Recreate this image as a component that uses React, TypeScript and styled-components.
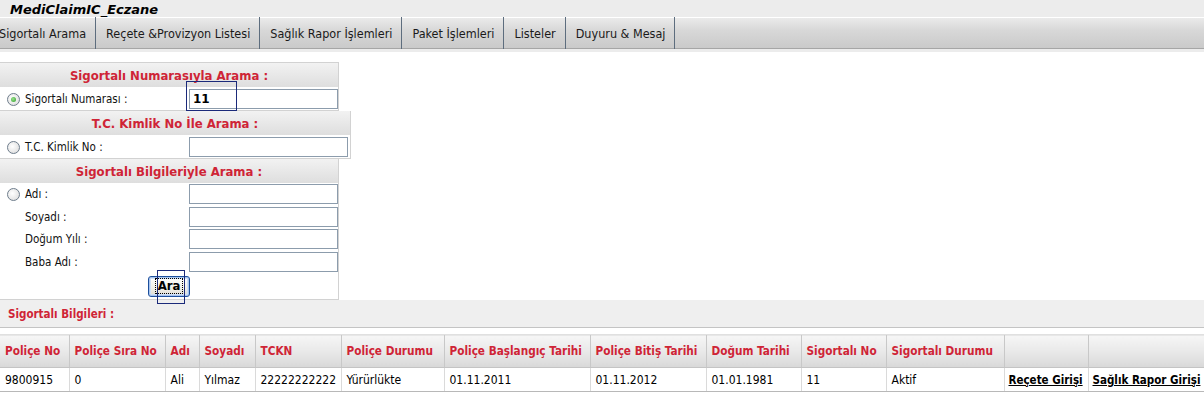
import React from "react";
import styled, { createGlobalStyle } from "styled-components";

const GlobalStyle = createGlobalStyle`
  html, body {
    margin: 0;
    padding: 0;
    background: #ffffff;
    font-family: "DejaVu Sans Condensed", "DejaVu Sans", sans-serif;
    color: #000;
    overflow: hidden;
  }
`;

const RED = "#cf2436";

const menuItems = [
  "Sigortalı Arama",
  "Reçete &Provizyon Listesi",
  "Sağlık Rapor İşlemleri",
  "Paket İşlemleri",
  "Listeler",
  "Duyuru & Mesaj",
];

const columns = [
  { title: "Poliçe No", width: 69 },
  { title: "Poliçe Sıra No", width: 96 },
  { title: "Adı", width: 34 },
  { title: "Soyadı", width: 56 },
  { title: "TCKN", width: 86 },
  { title: "Poliçe Durumu", width: 103 },
  { title: "Poliçe Başlangıç Tarihi", width: 146 },
  { title: "Poliçe Bitiş Tarihi", width: 116 },
  { title: "Doğum Tarihi", width: 95 },
  { title: "Sigortalı No", width: 85 },
  { title: "Sigortalı Durumu", width: 118 },
  { title: "", width: 84 },
  { title: "", width: 116 },
];

const row = [
  "9800915",
  "0",
  "Ali",
  "Yılmaz",
  "22222222222",
  "Yürürlükte",
  "01.11.2011",
  "01.11.2012",
  "01.01.1981",
  "11",
  "Aktif",
];

export default function App() {
  return (
    <Page>
      <GlobalStyle />
      <TitleBar>MediClaimIC_Eczane</TitleBar>
      <NavBar>
        <NavList>
          {menuItems.map((m) => (
            <NavItem key={m}>{m}</NavItem>
          ))}
        </NavList>
      </NavBar>

      <SearchArea>
        <Panel $width={339}>
          <PanelHeader>Sigortalı Numarasıyla Arama :</PanelHeader>
          <FieldRow>
            <FieldLabel>
              <Radio $checked />
              Sigortalı Numarası :
            </FieldLabel>
            <TextInput $width={149} defaultValue="11" $bold />
          </FieldRow>
        </Panel>

        <Panel $width={351}>
          <PanelHeader>T.C. Kimlik No İle Arama :</PanelHeader>
          <FieldRow>
            <FieldLabel>
              <Radio />
              T.C. Kimlik No :
            </FieldLabel>
            <TextInput $width={159} />
          </FieldRow>
        </Panel>

        <Panel $width={339}>
          <PanelHeader>Sigortalı Bilgileriyle Arama :</PanelHeader>
          <FieldRow $compact>
            <FieldLabel>
              <Radio />
              Adı :
            </FieldLabel>
            <TextInput $width={149} />
          </FieldRow>
          <FieldRow $compact>
            <FieldLabel>Soyadı :</FieldLabel>
            <TextInput $width={149} />
          </FieldRow>
          <FieldRow $compact>
            <FieldLabel>Doğum Yılı :</FieldLabel>
            <TextInput $width={149} />
          </FieldRow>
          <FieldRow $compact>
            <FieldLabel>Baba Adı :</FieldLabel>
            <TextInput $width={149} />
          </FieldRow>
          <ButtonRow>
            <SearchButton>
              <span>Ara</span>
            </SearchButton>
          </ButtonRow>
        </Panel>

        <FocusMark $x={186} $y={29} $w={51} $h={30} />
        <FocusMark $x={157} $y={218} $w={28} $h={34} />
      </SearchArea>

      <ResultBand>Sigortalı Bilgileri :</ResultBand>

      <ResultTable>
        <colgroup>
          {columns.map((c, i) => (
            <col key={i} style={{ width: c.width }} />
          ))}
        </colgroup>
        <thead>
          <tr>
            {columns.map((c, i) => (
              <HeadCell key={i}>{c.title}</HeadCell>
            ))}
          </tr>
        </thead>
        <tbody>
          <tr>
            {row.map((v, i) => (
              <DataCell key={i}>{v}</DataCell>
            ))}
            <DataCell>
              <ActionLink href="#">Reçete Girişi</ActionLink>
            </DataCell>
            <DataCell>
              <ActionLink href="#">Sağlık Rapor Girişi</ActionLink>
            </DataCell>
          </tr>
        </tbody>
      </ResultTable>
    </Page>
  );
}

const Page = styled.div`
  width: 1204px;
  height: 393px;
  overflow: hidden;
`;

const TitleBar = styled.div`
  height: 17px;
  background: #ececec;
  padding-left: 10px;
  font-family: "DejaVu Sans", sans-serif;
  font-weight: bold;
  font-style: italic;
  font-size: 13px;
  line-height: 20px;
  border-bottom: 1px solid #ffffff;
  overflow: hidden;
`;

const NavBar = styled.div`
  height: 30px;
  background: linear-gradient(#eaeaea 0%, #d8d8d8 40%, #cacaca 100%);
  border-bottom: 1px solid #a6a6a6;
  box-shadow: 0 3px 0 #ececec;
  margin-bottom: 3px;
`;

const NavList = styled.div`
  display: flex;
  height: 100%;
  margin-left: -11px;
`;

const NavItem = styled.div`
  display: flex;
  align-items: center;
  padding: 0 9px 0 10px;
  height: 32px;
  margin-top: -1px;
  font-size: 12.5px;
  color: #1a1a1a;
  border-right: 1px solid #5d6d7e;
  white-space: nowrap;
`;

const SearchArea = styled.div`
  position: relative;
  padding-top: 10px;
  display: flex;
  flex-direction: column;
  align-items: flex-start;
`;

const Panel = styled.div<{ $width: number }>`
  width: ${(p) => p.$width}px;
  box-sizing: border-box;
  border: 1px solid #d2d2d2;
  border-left: none;
  background: #fff;
  & + & {
    border-top: none;
  }
`;

const PanelHeader = styled.div`
  height: 24px;
  display: flex;
  align-items: center;
  justify-content: center;
  background: linear-gradient(#f2f2f2, #dedede);
  color: ${RED};
  font-weight: bold;
  font-size: 13px;
`;

const FieldRow = styled.div<{ $compact?: boolean }>`
  display: flex;
  align-items: center;
  height: ${(p) => (p.$compact ? "22.5px" : "23px")};
`;

const FieldLabel = styled.div`
  width: 189px;
  padding-left: 25px;
  box-sizing: border-box;
  position: relative;
  font-size: 11.5px;
  color: #111;
  display: flex;
  align-items: center;
`;

const Radio = styled.span<{ $checked?: boolean }>`
  position: absolute;
  left: 7px;
  top: 50%;
  margin-top: -6px;
  width: 11px;
  height: 11px;
  border-radius: 50%;
  border: 1px solid #6e7d8c;
  background: radial-gradient(circle at 40% 40%, #ffffff 0%, #e4e4e4 70%, #d0d0d0 100%);
  &::after {
    content: "";
    display: ${(p) => (p.$checked ? "block" : "none")};
    position: absolute;
    left: 3px;
    top: 3px;
    width: 5px;
    height: 5px;
    border-radius: 50%;
    background: radial-gradient(circle at 40% 40%, #9be28e, #2a9b25);
  }
`;

const TextInput = styled.input<{ $width: number; $bold?: boolean }>`
  width: ${(p) => p.$width}px;
  height: 20px;
  box-sizing: border-box;
  border: 1px solid #8c9cac;
  padding: 0 0 0 3px;
  margin: 0;
  font-family: "DejaVu Sans", sans-serif;
  font-size: 12px;
  font-weight: ${(p) => (p.$bold ? "bold" : "normal")};
  color: #000;
  outline: none;
  background: #fff;
`;

const ButtonRow = styled.div`
  height: 26px;
  padding-left: 148px;
  display: flex;
  align-items: center;
`;

const SearchButton = styled.button`
  width: 42px;
  height: 21px;
  padding: 0;
  border: 1px solid #1c4f9c;
  border-radius: 3px;
  background: linear-gradient(#ffffff, #f0efe8 60%, #dcdad0);
  box-shadow: inset 0 0 0 1px #a8c4ee, inset 0 0 0 2px #cfe0f8;
  font-family: "DejaVu Sans Condensed", sans-serif;
  font-weight: bold;
  font-size: 13px;
  color: #000;
  display: flex;
  align-items: center;
  justify-content: center;
  span {
    outline: 1px dotted #000;
    outline-offset: 0;
    padding: 0 2px;
    line-height: 14px;
  }
`;

const FocusMark = styled.div<{ $x: number; $y: number; $w: number; $h: number }>`
  position: absolute;
  left: ${(p) => p.$x}px;
  top: ${(p) => p.$y}px;
  width: ${(p) => p.$w}px;
  height: ${(p) => p.$h}px;
  box-sizing: border-box;
  border: 1px solid #1b2a7a;
  pointer-events: none;
`;

const ResultBand = styled.div`
  height: 27px;
  background: #efefef;
  border-bottom: 1px solid #c4c4c4;
  padding-left: 8px;
  display: flex;
  align-items: center;
  color: ${RED};
  font-weight: bold;
  font-size: 11.5px;
  margin-bottom: 6px;
`;

const ResultTable = styled.table`
  width: 1204px;
  border-collapse: collapse;
  table-layout: fixed;
`;

const HeadCell = styled.th`
  height: 32px;
  padding: 0 5px;
  text-align: left;
  background: linear-gradient(#f6f6f6, #e6e6e6 60%, #d8d8d8);
  border-left: 1px solid #c8c8c8;
  border-top: 1px solid #e0e0e0;
  border-bottom: 1px solid #c4c4c4;
  color: ${RED};
  font-weight: bold;
  font-size: 11.7px;
  white-space: nowrap;
  overflow: hidden;
  &:first-child {
    border-left: none;
  }
`;

const DataCell = styled.td`
  height: 23px;
  padding: 0 5px;
  border-left: 1px solid #dadada;
  border-bottom: 1px solid #b8b8b8;
  font-size: 12px;
  white-space: nowrap;
  overflow: hidden;
  &:first-child {
    border-left: none;
  }
  &:nth-last-child(-n + 2) {
    padding: 0 4px;
  }
`;

const ActionLink = styled.a`
  color: #000;
  font-weight: bold;
  font-size: 11.5px;
  text-decoration: underline;
`;
